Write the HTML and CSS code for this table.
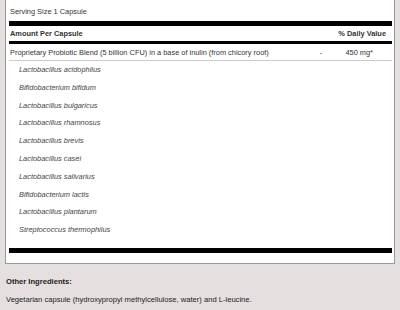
FILE: index.html
```html
<!DOCTYPE html>
<html>
<head>
<meta charset="utf-8">
<link rel="stylesheet" href="styles.css">
</head>
<body>
<div class="label">
  <div class="serving">Serving Size 1 Capsule</div>
  <div class="head"><span>Amount Per Capsule</span><span>% Daily Value</span></div>
  <div class="main">
    <span class="name">Proprietary Probiotic Blend (5 billion CFU) in a base of inulin (from chicory root)</span>
    <span class="dash">-</span>
    <span class="amt">450 mg*</span>
  </div>
  <ul class="items">
    <li>Lactobacillus acidophilus</li>
    <li>Bifidobacterium bifidum</li>
    <li>Lactobacillus bulgaricus</li>
    <li>Lactobacillus rhamnosus</li>
    <li>Lactobacillus brevis</li>
    <li>Lactobacillus casei</li>
    <li>Lactobacillus salivarius</li>
    <li>Bifidobacterium lactis</li>
    <li>Lactobacillus plantarum</li>
    <li>Streptococcus thermophilus</li>
  </ul>
</div>
<div class="other">
  <p class="title">Other Ingredients:</p>
  <p>Vegetarian capsule (hydroxypropyl methylcellulose, water) and L-leucine.</p>
</div>
</body>
</html>
```

FILE: styles.css
```css
html, body {
  margin: 0;
  padding: 0;
}
body {
  background: #e5dfdf;
  font-family: "Liberation Sans", Arial, sans-serif;
  font-size: 7.4px;
  color: #333;
}
.label {
  margin-left: 5px;
  width: 383px;
  padding: 0 2px 10px 3px;
  background: #fff;
  border: 1px solid #999;
  border-top: none;
}
.serving {
  height: 21px;
  line-height: 24px;
  padding-left: 1px;
  box-sizing: border-box;
}
.head {
  display: flex;
  justify-content: space-between;
  align-items: center;
  height: 15px;
  border-top: 5px solid #000;
  border-bottom: 3px solid #000;
  font-weight: bold;
  padding: 0 6px 0 1px;
}
.main {
  display: flex;
  align-items: center;
  height: 16px;
  border-bottom: 1px solid #ccc;
  padding-left: 1px;
}
.name {
  flex: 1;
}
.dash {
  width: 42px;
  text-align: center;
}
.amt {
  width: 50px;
  text-align: right;
  padding-right: 19px;
  box-sizing: border-box;
}
.items {
  list-style: none;
  margin: 0;
  padding: 0 0 9px 10px;
  border-bottom: 5px solid #000;
}
.items li {
  line-height: 17.8px;
  font-style: italic;
  color: #444;
}
.other {
  padding: 9px 0 0 6px;
  color: #222;
  font-size: 7.6px;
}
.other p {
  margin: 0;
  line-height: 18px;
}
.other .title {
  font-weight: bold;
}
```
